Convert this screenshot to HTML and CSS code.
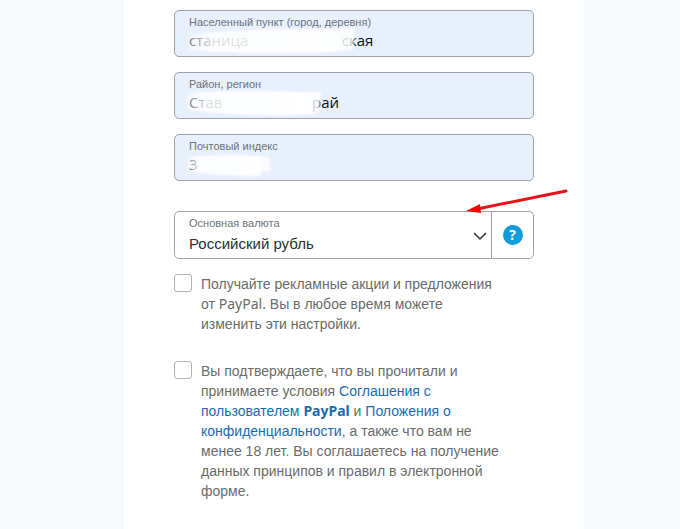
FILE: index.html
```html
<!DOCTYPE html>
<html lang="ru">
<head>
    <meta charset="UTF-8">
    <meta name="viewport" content="width=device-width, initial-scale=1.0">
    <title>PayPal</title>
    <link rel="stylesheet" href="styles.css">
</head>
<body>
    <svg width="0" height="0" class="defs" aria-hidden="true">
        <linearGradient id="fade">
            <stop offset="0" stop-color="#fff" stop-opacity="0.4"/>
            <stop offset="0.14" stop-color="#fff" stop-opacity="0.85"/>
            <stop offset="0.85" stop-color="#fff" stop-opacity="0.95"/>
            <stop offset="1" stop-color="#fff" stop-opacity="0.75"/>
        </linearGradient>
    </svg>
    <main class="card">
        <form class="form">
            <div class="field">
                <label for="city">Населенный пункт (город, деревня)</label>
                <input type="text" id="city" value="станица                        ская">
                <svg class="smudge" width="190" height="30" viewBox="0 0 190 30" aria-hidden="true">
                    <path d="M8 9 C45 2 130 4 172 2 L170 24 C130 29 60 27 8 25 Q2 16 8 9Z"/>
                </svg>
            </div>
            <div class="field">
                <label for="region">Район, регион</label>
                <input type="text" id="region" value="Став                       рай">
                <svg class="smudge" width="190" height="30" viewBox="0 0 190 30" aria-hidden="true">
                    <path d="M4 5 C50 1 105 4 138 4 L136 25 C100 30 45 27 4 22Z"/>
                </svg>
            </div>
            <div class="field">
                <label for="zip">Почтовый индекс</label>
                <input type="text" id="zip" value="3">
                <svg class="smudge" width="190" height="30" viewBox="0 0 190 30" aria-hidden="true">
                    <path d="M4 6 L58 5 L86 7 L88 21 L78 22 L78 26 C50 25 25 26 5 20Z"/>
                </svg>
            </div>

            <div class="currency">
                <div class="currency-select">
                    <label for="currency">Основная валюта</label>
                    <select id="currency">
                        <option>Российский рубль</option>
                    </select>
                    <svg class="chevron" width="14" height="9" viewBox="0 0 14 9" aria-hidden="true">
                        <path d="M1 1 L7 7 L13 1"/>
                    </svg>
                </div>
                <button type="button" class="help" aria-label="Справка"><span>?</span></button>
                <svg class="arrow" width="104" height="26" viewBox="0 0 104 26" aria-hidden="true">
                    <path class="arrow-line" d="M101 3 L12 21"/>
                    <path class="arrow-head" d="M1 23 L15 16 L16 25Z"/>
                </svg>
            </div>

            <div class="check">
                <input type="checkbox" id="promo">
                <label for="promo">Получайте рекламные акции и предложения от <span class="brand">PayPal.</span> Вы в любое время можете изменить эти настройки.</label>
            </div>
            <div class="check">
                <input type="checkbox" id="terms">
                <label for="terms">Вы подтверждаете, что вы прочитали и принимаете условия <a href="#">Соглашения с пользователем <b class="brand">PayPal</b></a> и <a href="#">Положения о конфиденциальности</a>, а также что вам не менее 18 лет. Вы соглашаетесь на получение данных принципов и правил в электронной форме.</label>
            </div>
        </form>
    </main>
</body>
</html>
```
FILE: styles.css
```css
* {
    box-sizing: border-box;
}
body {
    margin: 0;
    padding-left: 28px;
    background: #f7f9fc;
    font-family: "Liberation Sans", Arial, sans-serif;
    color: #6c7378;
}
.defs {
    position: absolute;
}
.card {
    max-width: 460px;
    min-height: 100vh;
    margin: 0 auto;
    padding: 10px 50px;
    background: #fff;
}
.field {
    position: relative;
    height: 47px;
    margin-bottom: 15px;
    padding: 4px 14px 0;
    background: #e8f0fe;
    border: 1px solid #9da3a6;
    border-radius: 5px;
}
.field label,
.currency-select label {
    display: block;
    font-size: 11px;
    line-height: 14px;
}
.field input {
    display: block;
    width: 100%;
    height: 21px;
    padding: 0;
    border: 0;
    outline: none;
    background: transparent;
    color: #111;
    font-family: "Open Sans", sans-serif;
    font-size: 15px;
}
.smudge {
    position: absolute;
    left: 8px;
    top: 15px;
    fill: url(#fade);
    filter: blur(1px);
    pointer-events: none;
}
.currency {
    position: relative;
    display: flex;
    height: 48px;
    margin: 30px 0 15px;
    border: 1px solid #9da3a6;
    border-radius: 5px;
}
.currency-select {
    position: relative;
    flex: 1;
    padding: 4px 0 0 14px;
}
.currency-select select {
    display: block;
    width: 100%;
    height: 26px;
    padding: 0;
    border: 0;
    outline: none;
    appearance: none;
    background: transparent;
    color: #2c2e2f;
    font-family: inherit;
    font-size: 15px;
}
.chevron {
    position: absolute;
    right: 4px;
    top: 20px;
    fill: none;
    stroke: #2c2e2f;
    stroke-width: 1.5;
    pointer-events: none;
}
.help {
    display: flex;
    align-items: center;
    justify-content: center;
    width: 42px;
    padding: 0;
    border: 0;
    border-left: 1px solid #9da3a6;
    background: transparent;
    cursor: pointer;
}
.help span {
    width: 20px;
    height: 20px;
    border-radius: 50%;
    background: #119bdd;
    color: #fff;
    font: bold 14px/20px "Open Sans", sans-serif;
}
.arrow {
    position: absolute;
    right: -36px;
    top: -24px;
    pointer-events: none;
}
.arrow-line {
    fill: none;
    stroke: #ea1218;
    stroke-width: 3;
    stroke-linecap: round;
}
.arrow-head {
    fill: #fa0505;
}
.check {
    display: flex;
    gap: 9px;
    margin-bottom: 27px;
    padding-right: 30px;
    color: #6b6b6b;
    font-size: 14px;
    line-height: 20px;
}
.check input {
    flex: none;
    appearance: none;
    width: 18px;
    height: 18px;
    margin: 0;
    border: 1px solid #b0b4b6;
    border-radius: 3px;
    background: #fff;
}
.check a {
    color: #1a6bb0;
    text-decoration: none;
}
.brand {
    font-family: "Noto Sans", sans-serif;
    font-size: 14px;
    line-height: 1;
}
```
